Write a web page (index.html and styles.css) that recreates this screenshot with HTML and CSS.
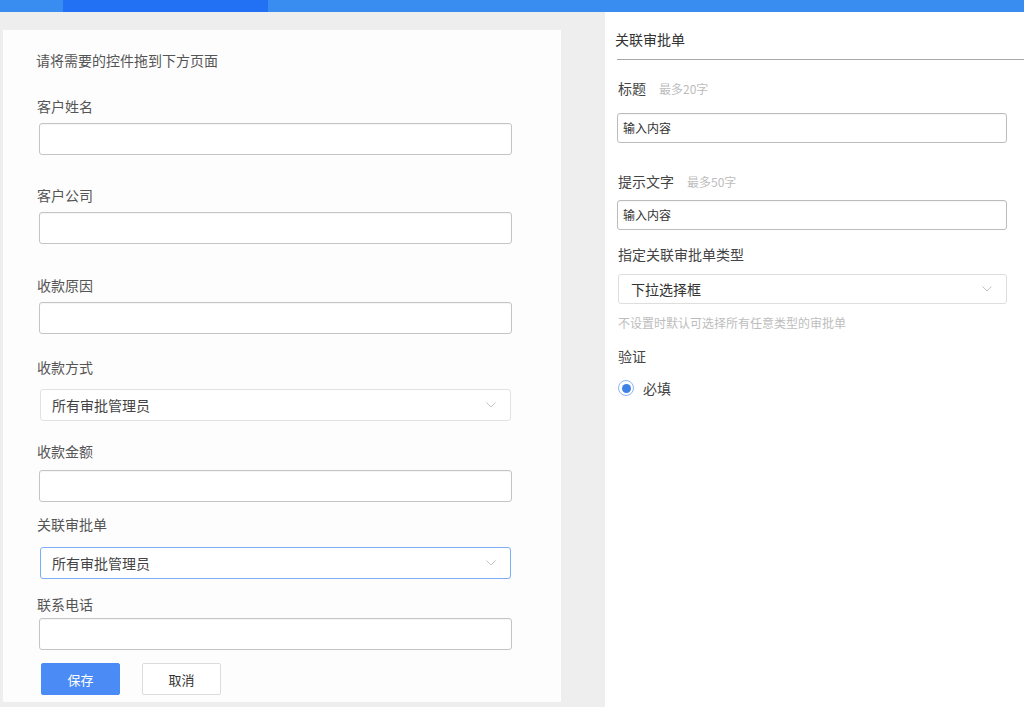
FILE: index.html
```html
<!DOCTYPE html>
<html lang="zh-CN">
<head>
<meta charset="utf-8">
<title>表单设计</title>
<link rel="stylesheet" href="styles.css">
</head>
<body>
<div class="topbar"><div class="tab-active"></div></div>
<div class="main">
  <section class="canvas">
    <div class="hint">请将需要的控件拖到下方页面</div>

    <div class="label mt-26">客户姓名</div>
    <div class="input gap-7"></div>

    <div class="label mt-30">客户公司</div>
    <div class="input gap-7"></div>

    <div class="label mt-31">收款原因</div>
    <div class="input gap-7"></div>

    <div class="label mt-23">收款方式</div>
    <div class="select gap-12">
      <span>所有审批管理员</span>
      <svg class="chev" width="10" height="6" viewBox="0 0 10 6"><polyline points="0.5,0.5 5,5 9.5,0.5" fill="none" stroke="#c4c4c4" stroke-width="1"/></svg>
    </div>

    <div class="label mt-20">收款金额</div>
    <div class="input gap-9"></div>

    <div class="label mt-12">关联审批单</div>
    <div class="select focus gap-13">
      <span>所有审批管理员</span>
      <svg class="chev" width="10" height="6" viewBox="0 0 10 6"><polyline points="0.5,0.5 5,5 9.5,0.5" fill="none" stroke="#c4c4c4" stroke-width="1"/></svg>
    </div>

    <div class="label mt-15">联系电话</div>
    <div class="input gap-4"></div>

    <div class="actions">
      <button class="btn primary">保存</button>
      <button class="btn">取消</button>
    </div>
  </section>

  <aside class="props">
    <div class="props-title">关联审批单</div>
    <div class="props-rule"></div>
    <div class="props-body">
      <div class="plabel pm-18">标题<span class="limit">最多20字</span></div>
      <div class="pinput pg-14">输入内容</div>

      <div class="plabel pm-28">提示文字<span class="limit">最多50字</span></div>
      <div class="pinput pg-8">输入内容</div>

      <div class="plabel pm-14">指定关联审批单类型</div>
      <div class="pselect pg-10">
        <span>下拉选择框</span>
        <svg class="chev" width="10" height="6" viewBox="0 0 10 6"><polyline points="0.5,0.5 5,5 9.5,0.5" fill="none" stroke="#c4c4c4" stroke-width="1"/></svg>
      </div>
      <div class="help">不设置时默认可选择所有任意类型的审批单</div>

      <div class="plabel pm-14">验证</div>
      <label class="radio-row">
        <span class="radio"><span class="dot"></span></span>
        <span>必填</span>
      </label>
    </div>
  </aside>
</div>
</body>
</html>
```

FILE: styles.css
```css
* { box-sizing: border-box; }

html, body {
  margin: 0;
  padding: 0;
}

body {
  width: 1024px;
  height: 707px;
  overflow: hidden;
  background: #eeeeee;
  font-family: "Noto Sans CJK SC", "Noto Sans", sans-serif;
  color: #444;
}

.topbar {
  height: 12px;
  background: #3a8df0;
}

.tab-active {
  margin-left: 63px;
  width: 205px;
  height: 12px;
  background: #2271f4;
}

.main {
  display: flex;
  height: 695px;
}

/* left canvas */
.canvas {
  margin: 18px 0 0 3px;
  width: 558px;
  height: 672px;
  background: #fdfdfd;
  padding: 20px 0 0 33px;
}

.hint {
  font-size: 14px;
  line-height: 20px;
  color: #555;
}

.label {
  margin-left: 1px;
  font-size: 14px;
  line-height: 20px;
  color: #555;
}

.mt-12 { margin-top: 12px; }
.mt-15 { margin-top: 15px; }
.mt-20 { margin-top: 20px; }
.mt-23 { margin-top: 23px; }
.mt-26 { margin-top: 26px; }
.mt-30 { margin-top: 30px; }
.mt-31 { margin-top: 31px; }

.gap-4 { margin-top: 4px; }
.gap-7 { margin-top: 7px; }
.gap-9 { margin-top: 9px; }
.gap-12 { margin-top: 12px; }
.gap-13 { margin-top: 13px; }

.input {
  margin-left: 3px;
  width: 473px;
  height: 32px;
  border: 1px solid #c4c4c4;
  border-radius: 3px;
  background: #fff;
  box-shadow: inset 0 1px 1px rgba(0,0,0,0.04);
}

.select {
  margin-left: 4px;
  width: 471px;
  height: 32px;
  border: 1px solid #e2e2e2;
  border-radius: 3px;
  background: #fff;
  display: flex;
  align-items: center;
  justify-content: space-between;
  padding: 0 14px 0 11px;
  font-size: 14px;
  color: #444;
}

.select.focus {
  border-color: #7aaef5;
}

.chev { display: block; }

.actions {
  margin: 13px 0 0 5px;
  display: flex;
  gap: 22px;
}

.btn {
  width: 79px;
  height: 32px;
  border: 1px solid #dcdcdc;
  border-radius: 2px;
  background: #fff;
  font-family: inherit;
  font-size: 13px;
  color: #333;
  padding: 0;
}

.btn.primary {
  background: #4a8bf5;
  border-color: #4a8bf5;
  color: #fff;
}

/* right properties panel */
.props {
  margin-left: 44px;
  flex: 1;
  background: #fff;
  padding-top: 17px;
}

.props-title {
  padding-left: 10px;
  font-size: 14px;
  line-height: 20px;
  color: #333;
}

.props-rule {
  margin: 10px 0 0 12px;
  border-top: 1px solid #a8a8a8;
}

.props-body {
  padding: 0 17px 0 12px;
}

.plabel {
  margin-left: 1px;
  font-size: 14px;
  line-height: 20px;
  color: #444;
  display: flex;
  align-items: baseline;
}

.limit {
  margin-left: 13px;
  font-size: 12px;
  color: #bdbdbd;
}

.pm-14 { margin-top: 14px; }
.pm-18 { margin-top: 18px; }
.pm-28 { margin-top: 28px; }

.pg-8 { margin-top: 8px; }
.pg-10 { margin-top: 10px; }
.pg-14 { margin-top: 14px; }

.pinput {
  height: 30px;
  border: 1px solid #bcbcbc;
  border-radius: 3px;
  padding-left: 5px;
  font-size: 12px;
  line-height: 28px;
  color: #333;
  box-shadow: inset 0 1px 1px rgba(0,0,0,0.04);
}

.pselect {
  margin-left: 1px;
  height: 30px;
  border: 1px solid #dedede;
  border-radius: 3px;
  display: flex;
  align-items: center;
  justify-content: space-between;
  padding: 0 14px 0 12px;
  font-size: 14px;
  color: #333;
}

.help {
  margin: 10px 0 0 1px;
  font-size: 12px;
  line-height: 18px;
  color: #bdbdbd;
}

.radio-row {
  margin-top: 12px;
  display: flex;
  align-items: center;
  gap: 9px;
  height: 20px;
  font-size: 14px;
  color: #444;
}

.radio {
  width: 16px;
  height: 16px;
  border: 1px solid #8db6f2;
  border-radius: 50%;
  display: flex;
  align-items: center;
  justify-content: center;
  margin-left: 1px;
}

.dot {
  width: 9px;
  height: 9px;
  border-radius: 50%;
  background: #3f82e6;
}
```
